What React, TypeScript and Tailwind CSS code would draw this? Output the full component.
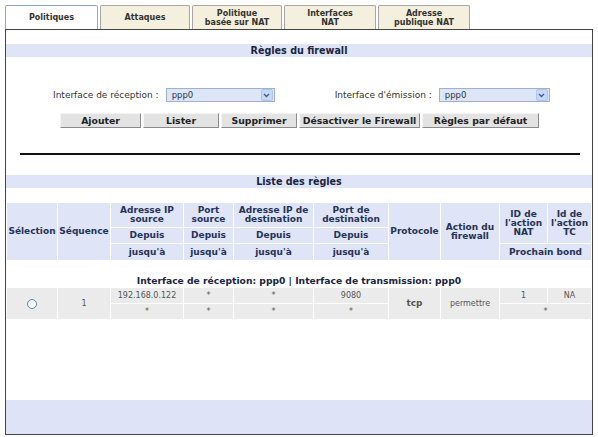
import React from 'react';

const tabs = [
  { label: 'Politiques', w: 'w-[93px]', active: true },
  { label: 'Attaques', w: 'w-[90px]' },
  { label: 'Politique\nbasée sur NAT', w: 'w-[90px]' },
  { label: 'Interfaces\nNAT', w: 'w-[92px]' },
  { label: 'Adresse\npublique NAT', w: 'w-[92px]' },
];

const buttons = [
  { label: 'Ajouter', w: 'w-[81px]' },
  { label: 'Lister', w: 'w-[76px]' },
  { label: 'Supprimer', w: 'w-[76px]' },
  { label: 'Désactiver le Firewall', w: 'w-[121px]' },
  { label: 'Règles par défaut', w: 'w-[117px]' },
];

function Select({ w }: { w: string }) {
  return (
    <div className={`${w} h-[14px] flex items-center border border-[#9fb0cf] bg-[#dde6f6]`}>
      <span className="flex-1 pl-[5px] text-[8.5px] text-[#2a3550] leading-none">ppp0</span>
      <span className="w-[12px] h-[12px] mr-[1px] flex items-center justify-center rounded-[2px] bg-[#c9d8f2] border border-[#b3c4e6]">
        <svg width="7" height="5" viewBox="0 0 7 5">
          <path d="M1 1 L3.5 3.5 L6 1" fill="none" stroke="#3b5fa8" strokeWidth="1.4" />
        </svg>
      </span>
    </div>
  );
}

function TitleBar({ children }: { children: React.ReactNode }) {
  return (
    <div className="h-[13px] bg-[#dfe4f7] flex items-center justify-center text-[9.6px] font-bold text-[#1a2540] leading-none">
      {children}
    </div>
  );
}

const th = 'bg-[#dfe4f7] text-[9px] font-bold text-[#253356] leading-[9px] text-center p-0';
const td = 'bg-[#ebebeb] text-[8px] text-[#555] leading-none text-center p-0';

export default function App() {
  return (
    <div
      className="w-[598px] h-[437px] bg-white overflow-hidden"
      style={{ fontFamily: '"DejaVu Sans", Verdana, sans-serif' }}
    >
      {/* onglets */}
      <div className="flex gap-[2px] pl-[5px] pt-[5px] h-[29px]">
        {tabs.map((t) => (
          <div
            key={t.label}
            className={`${t.w} h-[24px] flex items-center justify-center text-center whitespace-pre-line text-[8px] font-bold leading-[9px] text-[#333] border border-b-0 border-[#a6a6a6] rounded-t-[2px] ${
              t.active ? 'bg-white border-t-[#8ea2c8]' : 'bg-[#f4f0dd]'
            }`}
          >
            {t.label}
          </div>
        ))}
      </div>

      {/* panneau */}
      <div className="mx-[5px] w-[588px] h-[406px] border border-[#444] flex flex-col">
        <div className="mt-[14px]">
          <TitleBar>Règles du firewall</TitleBar>
        </div>

        <div className="mt-[31px] flex items-center pl-[47px] text-[9px] text-[#333] leading-none">
          <span>Interface de réception :</span>
          <div className="ml-[7px]">
            <Select w="w-[109px]" />
          </div>
          <span className="ml-[60px]">Interface d'émission :</span>
          <div className="ml-[7px]">
            <Select w="w-[111px]" />
          </div>
        </div>

        <div className="mt-[11px] flex gap-[2px] pl-[54px]">
          {buttons.map((b) => (
            <div
              key={b.label}
              className={`${b.w} h-[15px] flex items-center justify-center bg-[#e3e3e3] border border-t-[#f4f4f4] border-l-[#f4f4f4] border-r-[#8a8a8a] border-b-[#8a8a8a] text-[9.3px] font-bold text-[#222] leading-none`}
            >
              {b.label}
            </div>
          ))}
        </div>

        <div className="mt-[25px] ml-[14px] w-[560px] h-[2px] bg-[#111]" />

        <div className="mt-[20px]">
          <TitleBar>Liste des règles</TitleBar>
        </div>

        <table className="mt-[14px] w-[586px] border-separate border-spacing-[1px] table-fixed">
          <colgroup>
            <col className="w-[50px]" />
            <col className="w-[52px]" />
            <col className="w-[72px]" />
            <col className="w-[49px]" />
            <col className="w-[79px]" />
            <col className="w-[74px]" />
            <col className="w-[51px]" />
            <col className="w-[58px]" />
            <col className="w-[47px]" />
            <col className="w-[43px]" />
          </colgroup>
          <tbody>
            <tr className="h-[24px]">
              <td rowSpan={3} className={th}>Sélection</td>
              <td rowSpan={3} className={th}>Séquence</td>
              <td className={th}>Adresse IP<br />source</td>
              <td className={th}>Port<br />source</td>
              <td className={th}>Adresse IP de<br />destination</td>
              <td className={th}>Port de<br />destination</td>
              <td rowSpan={3} className={th}>Protocole</td>
              <td rowSpan={3} className={th}>Action du<br />firewall</td>
              <td rowSpan={2} className={th}>ID de<br />l'action<br />NAT</td>
              <td rowSpan={2} className={th}>Id de<br />l'action<br />TC</td>
            </tr>
            <tr className="h-[15px]">
              <td className={th}>Depuis</td>
              <td className={th}>Depuis</td>
              <td className={th}>Depuis</td>
              <td className={th}>Depuis</td>
            </tr>
            <tr className="h-[16px]">
              <td className={th}>jusqu'à</td>
              <td className={th}>jusqu'à</td>
              <td className={th}>jusqu'à</td>
              <td className={th}>jusqu'à</td>
              <td colSpan={2} className={th}>Prochain bond</td>
            </tr>
            <tr className="h-[26px]">
              <td colSpan={10} className="p-0 pb-[2px] align-bottom text-center text-[9.2px] font-bold text-[#1a2540] leading-none">
                Interface de réception: ppp0 | Interface de transmission: ppp0
              </td>
            </tr>
            <tr className="h-[15px]">
              <td rowSpan={2} className={td}>
                <span className="inline-block w-[10px] h-[10px] rounded-full border border-[#6e86b5] bg-gradient-to-br from-[#e4ebf7] to-white align-middle" />
              </td>
              <td rowSpan={2} className={td}>1</td>
              <td className={td}>192.168.0.122</td>
              <td className={td}>*</td>
              <td className={td}>*</td>
              <td className={td}>9080</td>
              <td rowSpan={2} className={`${td} font-bold text-[#333] text-[9px]`}>tcp</td>
              <td rowSpan={2} className={td}>permettre</td>
              <td className={td}>1</td>
              <td className={td}>NA</td>
            </tr>
            <tr className="h-[15px]">
              <td className={td}>*</td>
              <td className={td}>*</td>
              <td className={td}>*</td>
              <td className={td}>*</td>
              <td colSpan={2} className={td}>*</td>
            </tr>
          </tbody>
        </table>

        <div className="mt-auto h-[34px] bg-[#dfe3f7]" />
      </div>
    </div>
  );
}
